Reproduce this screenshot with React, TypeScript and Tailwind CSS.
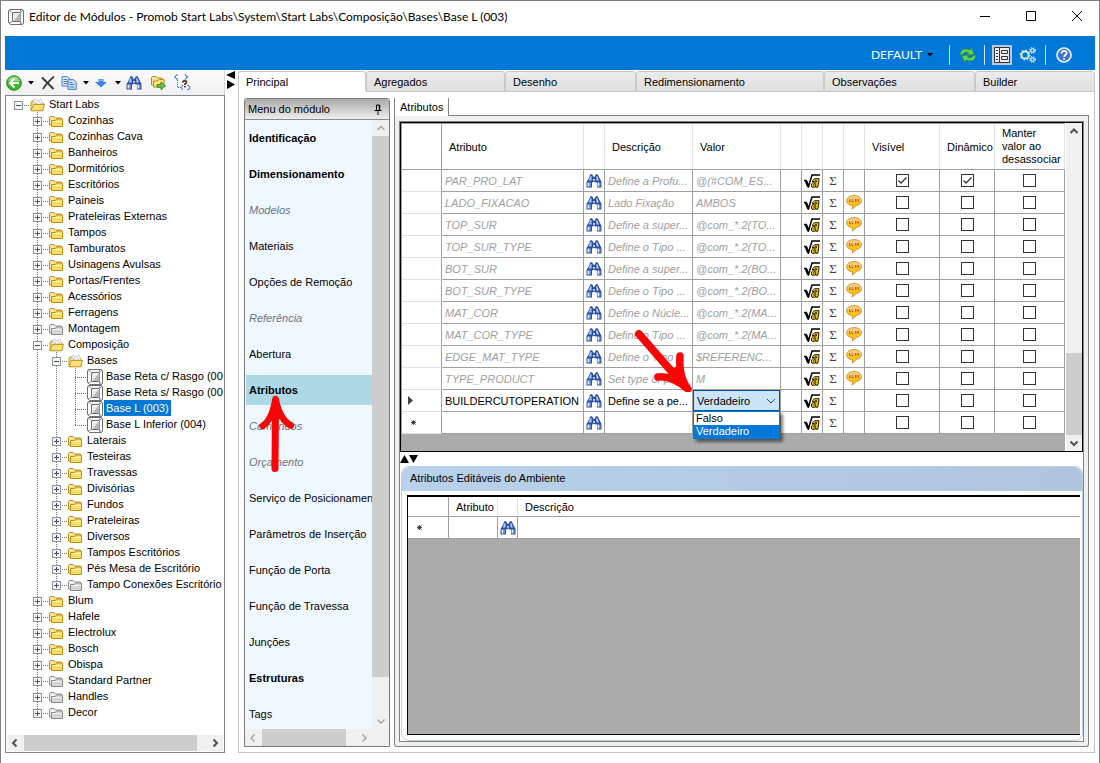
import type { ReactNode } from "react"
import clsx from "clsx"

/* ---------- data ---------- */

type NodeKind = "folder" | "open" | "gray" | "module"
type TreeItem = { label: string; level: number; kind: NodeKind; toggle?: "+" | "-"; last?: boolean; selected?: boolean }

const tree: TreeItem[] = [
  { label: "Start Labs", level: 0, kind: "open", toggle: "-" },
  { label: "Cozinhas", level: 1, kind: "folder", toggle: "+" },
  { label: "Cozinhas Cava", level: 1, kind: "folder", toggle: "+" },
  { label: "Banheiros", level: 1, kind: "folder", toggle: "+" },
  { label: "Dormitórios", level: 1, kind: "folder", toggle: "+" },
  { label: "Escritórios", level: 1, kind: "folder", toggle: "+" },
  { label: "Paineis", level: 1, kind: "folder", toggle: "+" },
  { label: "Prateleiras Externas", level: 1, kind: "folder", toggle: "+" },
  { label: "Tampos", level: 1, kind: "folder", toggle: "+" },
  { label: "Tamburatos", level: 1, kind: "folder", toggle: "+" },
  { label: "Usinagens Avulsas", level: 1, kind: "folder", toggle: "+" },
  { label: "Portas/Frentes", level: 1, kind: "folder", toggle: "+" },
  { label: "Acessórios", level: 1, kind: "folder", toggle: "+" },
  { label: "Ferragens", level: 1, kind: "folder", toggle: "+" },
  { label: "Montagem", level: 1, kind: "gray", toggle: "+" },
  { label: "Composição", level: 1, kind: "open", toggle: "-" },
  { label: "Bases", level: 2, kind: "open", toggle: "-" },
  { label: "Base Reta c/ Rasgo (00", level: 3, kind: "module" },
  { label: "Base Reta s/ Rasgo (00", level: 3, kind: "module" },
  { label: "Base L (003)", level: 3, kind: "module", selected: true },
  { label: "Base L Inferior (004)", level: 3, kind: "module", last: true },
  { label: "Laterais", level: 2, kind: "folder", toggle: "+" },
  { label: "Testeiras", level: 2, kind: "folder", toggle: "+" },
  { label: "Travessas", level: 2, kind: "folder", toggle: "+" },
  { label: "Divisórias", level: 2, kind: "folder", toggle: "+" },
  { label: "Fundos", level: 2, kind: "folder", toggle: "+" },
  { label: "Prateleiras", level: 2, kind: "folder", toggle: "+" },
  { label: "Diversos", level: 2, kind: "folder", toggle: "+" },
  { label: "Tampos Escritórios", level: 2, kind: "folder", toggle: "+" },
  { label: "Pés Mesa de Escritório", level: 2, kind: "folder", toggle: "+" },
  { label: "Tampo Conexões Escritório", level: 2, kind: "gray", toggle: "+", last: true },
  { label: "Blum", level: 1, kind: "folder", toggle: "+" },
  { label: "Hafele", level: 1, kind: "folder", toggle: "+" },
  { label: "Electrolux", level: 1, kind: "folder", toggle: "+" },
  { label: "Bosch", level: 1, kind: "folder", toggle: "+" },
  { label: "Obispa", level: 1, kind: "folder", toggle: "+" },
  { label: "Standard Partner", level: 1, kind: "gray", toggle: "+" },
  { label: "Handles", level: 1, kind: "gray", toggle: "+" },
  { label: "Decor", level: 1, kind: "gray", toggle: "+", last: true },
]

const tabs = ["Principal", "Agregados", "Desenho", "Redimensionamento", "Observações", "Builder"]

const menu = [
  { label: "Identificação", style: "bold" },
  { label: "Dimensionamento", style: "bold" },
  { label: "Modelos", style: "off" },
  { label: "Materiais", style: "" },
  { label: "Opções de Remoção", style: "" },
  { label: "Referência", style: "off" },
  { label: "Abertura", style: "" },
  { label: "Atributos", style: "bold", active: true },
  { label: "Comandos", style: "off" },
  { label: "Orçamento", style: "off" },
  { label: "Serviço de Posicionamen", style: "" },
  { label: "Parâmetros de Inserção", style: "" },
  { label: "Função de Porta", style: "" },
  { label: "Função de Travessa", style: "" },
  { label: "Junções", style: "" },
  { label: "Estruturas", style: "bold" },
  { label: "Tags", style: "" },
]

type Row = { name: string; desc: string; value: string; note?: boolean; on?: boolean; mark?: "current" | "new" }

const rows: Row[] = [
  { name: "PAR_PRO_LAT", desc: "Define a Profu...", value: "@(#COM_ES...", on: true },
  { name: "LADO_FIXACAO", desc: "Lado Fixação", value: "AMBOS", note: true },
  { name: "TOP_SUR", desc: "Define a super...", value: "@com_*.2(TO...", note: true },
  { name: "TOP_SUR_TYPE", desc: "Define o Tipo ...", value: "@com_*.2(TO...", note: true },
  { name: "BOT_SUR", desc: "Define a super...", value: "@com_*.2(BO...", note: true },
  { name: "BOT_SUR_TYPE", desc: "Define o Tipo ...", value: "@com_*.2(BO...", note: true },
  { name: "MAT_COR", desc: "Define o Núcle...", value: "@com_*.2(MA...", note: true },
  { name: "MAT_COR_TYPE", desc: "Define o Tipo ...", value: "@com_*.2(MA...", note: true },
  { name: "EDGE_MAT_TYPE", desc: "Define o Tipo ...", value: "$REFERENC...", note: true },
  { name: "TYPE_PRODUCT", desc: "Set type of pr...", value: "M", note: true },
  { name: "BUILDERCUTOPERATION", desc: "Define se a pe...", value: "Verdadeiro", mark: "current" },
  { name: "", desc: "", value: "", mark: "new" },
]

/* ---------- icons ---------- */

const ModuleIcon = ({ className = "" }: { className?: string }) => (
  <svg viewBox="0 0 16 16" className={clsx("size-4 shrink-0", className)} fill="none" stroke="#6e6e6e">
    <path d="M.5 1.500 1.500.5h13l1 1v13l-1 1H2.500L.5 13.500z" fill="#fff" />
    <path d="M1 1 4.500 3.500M15 1 12.500 3.500M1 14 4.500 12.500M14.500 15 12.500 12.500" strokeWidth=".8" />
    <path d="M4.500 3.500h8v9h-8z" fill="#eee" />
    <path d="M12 4v8H5.500z" fill="#b8b8b8" stroke="none" />
    <path d="M12.500 1v14" stroke="#9a9a9a" />
  </svg>
)

const FolderIcon = ({ kind }: { kind: NodeKind }) => {
  const gray = kind === "gray"
  const line = gray ? "#8b8b8b" : "#b8901c"
  const fill = gray ? "#d6d6d6" : "#fadc62"
  if (kind === "open")
    return (
      <svg viewBox="0 0 15 14" className="h-3.5 w-[15px]" stroke="#c39a22">
        <path d="M1 12.500V4.500L2 3h3l1 1.500h7v8z" fill="#f3d877" />
        <path d="M2.500 6 5 1l3 2 3-2 2 5z" fill="#fff" stroke="#bcb8a0" strokeWidth=".7" />
        <path d="m4 4 4 3M7 3 5 7m4-4 2 3" stroke="#96a5b5" strokeWidth=".6" />
        <path d="M1 12.800 3.500 6.500h11l-2 6.300z" fill="#fbe07a" />
      </svg>
    )
  return (
    <svg viewBox="0 0 15 14" className="h-3.5 w-[15px]" stroke={line}>
      <path d="M.5 11V3.500l1-1h3.500l1.500 1.500h6v7z" fill={gray ? "#eee" : "#f8e6a0"} />
      <path d="M2.500 12.500v-6h4l1-1.500h6v7.500z" fill={fill} />
      <path d="M3.500 7.500h9.500" stroke="#fff" opacity=".7" />
    </svg>
  )
}

const Binoculars = () => (
  <svg viewBox="0 0 16 16" className="mx-auto size-4">
    <path d="M3 5 4 2h2.500L8 4.500 9.500 2H12l1.500 3 2 4v5.500h-4.500V9.500H9.500L8 8.500l-1.500 1H6v5H.5V9z" fill="#2b4ea3" />
    <path d="M1.500 9.500h2v4h-2zM11.500 9.500h1.500v4h-1.500z" fill="#e3eefc" />
    <path d="M3.500 9.500H5v4H3.500zM13 9.500h1.500v4H13z" fill="#6f98dc" />
    <path d="m3.800 5 .7-2h1L5.500 7.500H2.800zM10.200 3h1l1.800 4.500h-2.500z" fill="#b5cff5" />
    <path d="M7.200 6h1.600v1.800H7.200z" fill="#eef4fc" />
    <path d="M4.200 1.500H6.300M9.700 1.500h2.100" stroke="#5b80c8" />
  </svg>
)

const RootIcon = () => (
  <svg viewBox="0 0 16 14" className="mx-auto h-3.5 w-4" fill="none">
    <path d="M0 6.500h2l2.500 6L8 1h8" stroke="#000" strokeWidth="1.500" />
    <path d="m2 7 2.500 6" stroke="#000" strokeWidth="2.500" />
    <path d="M8.700 6.500 10.500 4.700H15v1.200l-1.200 7.300h-2.200l.2-1-1.500 1.100H8.200L7.300 12l.5-2.300 2-1.700h2.500l.2-1.300h-1.500l-1 1H8.500z" fill="#ffc800" stroke="#000" strokeWidth=".9" />
    <path d="m9.800 11.300.3-1.600h1.700l-.3 1.600z" fill="#fff" stroke="#000" strokeWidth=".7" />
  </svg>
)

const NoteIcon = () => (
  <svg viewBox="0 0 16 15" className="mx-auto h-[15px] w-4">
    <path d="M8 .6c4.200 0 7.400 2 7.400 5 0 2.800-2.200 4.400-5 4.900L6 14.200l.8-3.600C3 10.300.6 8.500.6 5.700c0-3 3.200-5.100 7.400-5.100z" fill="#fcc21c" stroke="#c98d38" strokeWidth=".9" />
    <path d="M8 1.200c3.600 0 6.400 1.500 6.600 4.300H1.400C1.600 2.700 4.400 1.200 8 1.200z" fill="#fbcb85" />
    <path d="M3.500 4v2.500H5M6 4v2.500h1.500M9.500 4v2.500M11 4v2.500M12.500 4v2.500" stroke="#b8651b" fill="none" />
  </svg>
)

const Pointer = ({ className = "" }: { className?: string }) => (
  <svg viewBox="0 0 6 4" className={clsx("h-1 w-1.5 shrink-0", className)}>
    <path d="M0 0h6L3 3.500z" />
  </svg>
)

const Chevron = ({ dir, dim }: { dir: "up" | "down" | "left" | "right"; dim?: boolean }) => {
  const d = { up: "M1.500 7 5 3.500 8.500 7", down: "M1.500 3.500 5 7l3.500-3.500", left: "M6.500 1.500 3 5l3.500 3.500", right: "M3.500 1.500 7 5 3.500 8.500" }[dir]
  return (
    <svg viewBox="0 0 10 10" className="size-2.5" fill="none" stroke={dim ? "#a3a3a3" : "#505050"} strokeWidth={dim ? "1.400" : "2"}>
      <path d={d} />
    </svg>
  )
}

const ScrollButton = ({ dir, dim }: { dir: "up" | "down" | "left" | "right"; dim?: boolean }) => (
  <button aria-label={dir} className="flex size-4 shrink-0 items-center justify-center">
    <Chevron dir={dir} dim={dim} />
  </button>
)

/* ---------- tree panel ---------- */

const Guide = ({ children, vertical, half }: { children?: ReactNode; vertical?: boolean; half?: boolean }) => (
  <svg viewBox="0 0 19 16" className="h-4 w-[19px] shrink-0 overflow-visible" shapeRendering="crispEdges">
    {vertical && <path d={half ? "M9.500 0v9" : "M9.500 0v16"} stroke="#777" strokeDasharray="1 1" />}
    {children}
  </svg>
)

const TreeRow = ({ item, open2 }: { item: TreeItem; open2: boolean }) => (
  <li className="flex h-4 items-center pl-[3px]">
    {Array.from({ length: item.level }, (_, i) => (
      <Guide key={i} vertical={i === 1 || (i === 2 && open2)} />
    ))}
    <Guide vertical={item.level > 0} half={item.last}>
      <path d="M9 9.500h12" stroke="#777" strokeDasharray="1 1" />
      {item.toggle && (
        <>
          <path d="M5.500 5.500h8v8h-8z" fill="#f6f6f6" stroke="#919191" />
          <path d={item.toggle === "+" ? "M7 9.500h5M9.500 7v5" : "M7 9.500h5"} stroke="#31519b" />
        </>
      )}
    </Guide>
    <span className="flex w-[19px] shrink-0 justify-center pt-0.5">
      {item.kind === "module" ? <ModuleIcon /> : <FolderIcon kind={item.kind} />}
    </span>
    <a href="#" className={clsx("px-0.5 leading-4 whitespace-nowrap", item.selected && "bg-[#0078d7] text-white")}>
      {item.label}
    </a>
  </li>
)

const ToolButton = ({ label, children, className }: { label: string; children: ReactNode; className?: string }) => (
  <button aria-label={label} className={clsx("flex h-5 shrink-0 items-center justify-center", className)}>
    {children}
  </button>
)

const TreeToolbar = () => (
  <div className="flex h-[25px] items-center border-r border-gray-300 bg-linear-to-b from-[#fafafa] to-[#f0f0f0]">
    <ToolButton label="Voltar" className="w-[18px]">
      <svg viewBox="0 0 16 16" className="size-4">
        <circle cx="8" cy="8" r="7.300" fill="#3db52c" stroke="#28871c" />
        <path d="M2 6a6.300 6.300 0 0 1 12 0C10 8 6 4 2 6z" fill="#8fdc7d" />
        <path d="M8.500 3.500 4 8l4.500 4.500M4.500 8H13" stroke="#fff" strokeWidth="2.200" fill="none" />
      </svg>
    </ToolButton>
    <ToolButton label="Opções de voltar" className="w-4"><Pointer /></ToolButton>
    <ToolButton label="Excluir" className="w-[18px]">
      <svg viewBox="0 0 14 14" className="size-3.5" stroke="#3a3a3a" fill="none">
        <path d="M1 1.500 12.500 13" strokeWidth="2" />
        <path d="M13 .5C9 4 5 8 2 13" strokeWidth="1.700" />
      </svg>
    </ToolButton>
    <ToolButton label="Copiar" className="ml-0.5 w-5">
      <svg viewBox="0 0 16 14" className="h-3.5 w-4" stroke="#4a78bb">
        <path d="M1 .7h5.500l2 2V10H1z" fill="#e4effc" />
        <path d="M2.500 3.500H6m-3.500 2H7m-4.500 2H7" />
        <path d="M7 3.700h5.500l2.800 2.800v6.800H7z" fill="#cfe2fa" />
        <path d="M8.500 6.500h3m-3 2h5m-5 2.500h5" />
      </svg>
    </ToolButton>
    <ToolButton label="Opções de copiar" className="w-3.5"><Pointer /></ToolButton>
    <ToolButton label="Mover" className="ml-0.5 w-3">
      <svg viewBox="0 0 12 10" className="h-2.5 w-3">
        <path d="M3.500 1h5v3H12L6 9.500 0 4h3.500z" fill="#3f82e4" />
        <path d="M4 1.500h4v1.500H4z" fill="#86b4f2" />
      </svg>
    </ToolButton>
    <ToolButton label="Opções de mover" className="ml-1 w-3.5"><Pointer /></ToolButton>
    <ToolButton label="Localizar" className="w-[18px]"><Binoculars /></ToolButton>
    <ToolButton label="Exportar" className="ml-1.5 w-[18px]">
      <svg viewBox="0 0 15 14" className="h-3.5 w-[15px]" stroke="#b48d1c">
        <path d="M.5 9V1.500l1-1H5L6.500 2H11v7z" fill="#f6e39a" />
        <path d="M2.500 11V5h4L8 3.500h5V11z" fill="#fbe27a" />
        <path d="M6 8.500h4V6l4.500 4L10 13.700v-2.500H6z" fill="#6cc644" stroke="#3c8a26" />
      </svg>
    </ToolButton>
    <ToolButton label="Propriedades" className="ml-1.5 w-[18px]">
      <svg viewBox="0 0 17 17" className="size-[17px]" fill="none" stroke="#2c62c9">
        <path d="M3.500.5.5 3l3 2.500M11 .5 13.500 3 11 5.500M13.500 11l3 2.500-3 2.500M9 11l-2 2.500L9 16" strokeWidth="1.200" strokeDasharray="1.500 .6" />
        <path d="M3.500 6v7.500h3" strokeDasharray="1 1" />
        <path d="M9 8.500C9 6 12.500 6 12.500 8c0 1.400-1.700 1.300-1.700 3M10.800 12v1.500" stroke="#5a3418" strokeWidth="1.700" />
      </svg>
    </ToolButton>
  </div>
)

const TreePanel = () => (
  <aside className="flex w-[220px] shrink-0 flex-col">
    <TreeToolbar />
    <div className="flex flex-1 flex-col border border-[#828790] bg-white">
      <ul className="flex-1 overflow-hidden">
        {tree.map((item, i) => (
          <TreeRow key={i} item={item} open2={i > 16 && i < 31 && item.level > 1} />
        ))}
      </ul>
      <div className="m-px flex bg-[#f0f0f0]">
        <ScrollButton dir="left" />
        <div className="ml-px h-4 w-[173px] bg-[#cdcdcd]" />
        <div className="ml-auto"><ScrollButton dir="right" /></div>
      </div>
    </div>
  </aside>
)

/* ---------- module menu ---------- */

const RedUpArrow = () => (
  <svg viewBox="0 0 36 86" className="pointer-events-none absolute top-4 left-3 z-10 h-[86px] w-9" fill="none" stroke="#fa0505" strokeLinecap="round" strokeLinejoin="round">
    <path d="M17 77.500 17.500 10" strokeWidth="7" />
    <path d="M4.500 35C11 31 15.500 20 17.500 8 20 20 24 30 33 34.500" strokeWidth="6.500" />
    <path d="M17.500 5 9.500 28h16z" fill="#fa0505" stroke="none" />
  </svg>
)

const ModuleMenu = () => (
  <div className="flex w-[146px] shrink-0 flex-col rounded-t-[3px] border border-[#7a7a7a] bg-[#f0f0f0]">
    <div className="flex h-[21px] items-center justify-between rounded-t-[2px] border-b border-[#8a8a8a] bg-linear-to-b from-[#aaa] to-[#eee] pr-[7px] pl-[3px]">
      <h2>Menu do módulo</h2>
      <button aria-label="Fixar menu">
        <svg viewBox="0 0 8 11" className="h-[11px] w-2" fill="none" stroke="#000">
          <path d="M2.500 6V1h3v5M.500 6.500h7M4 7v4" />
          <path d="M5.500 1v5" strokeWidth="1.500" />
        </svg>
      </button>
    </div>
    <div className="flex flex-1">
      <nav className="flex flex-1 flex-col gap-1.5 overflow-hidden bg-[#f0f8ff] pt-[3px] pl-px">
        {menu.map(({ label, style, active }) => (
          <a
            key={label}
            href="#"
            className={clsx(
              "relative flex h-[30px] items-center pl-[3px] whitespace-nowrap",
              active && "bg-[#add8e6]",
              style === "bold" && "font-bold",
              style === "off" && "text-gray-500 italic",
            )}
          >
            {label}
            {active && <RedUpArrow />}
          </a>
        ))}
      </nav>
      <div className="flex w-[17px] flex-col items-center bg-[#f0f0f0]">
        <ScrollButton dir="up" dim />
        <div className="min-h-10 w-full flex-1 bg-[#cdcdcd]" />
        <div className="pt-9"><ScrollButton dir="down" dim /></div>
      </div>
    </div>
    <div className="flex h-[17px] items-center pr-[17px]">
      <ScrollButton dir="left" dim />
      <div className="ml-px h-full w-[84px] bg-[#cdcdcd]" />
      <div className="ml-auto"><ScrollButton dir="right" dim /></div>
    </div>
  </div>
)

/* ---------- attribute grids ---------- */

const Tick = ({ label, on }: { label: string; on?: boolean }) => (
  <label className="relative mx-auto block size-[13px]">
    <input type="checkbox" aria-label={label} defaultChecked={on} className="peer block size-[13px] appearance-none border border-[#333] bg-white" />
    <svg viewBox="0 0 13 13" className="pointer-events-none absolute inset-0 hidden size-[13px] peer-checked:block" fill="none" stroke="#333">
      <path d="m2.500 6.500 2.500 2.500 5.500-5.500" strokeWidth="1.300" />
    </svg>
  </label>
)

const RedDownArrow = () => (
  <svg viewBox="0 0 60 66" className="pointer-events-none absolute -top-16 -left-[61px] z-20 h-[66px] w-[60px]" fill="none" stroke="#fa0505" strokeLinecap="round" strokeLinejoin="round">
    <path d="m7 8 40 46" strokeWidth="8" />
    <path d="M26 51c9-1 18 2 30 12C49 54 47 42 48 30" strokeWidth="7.500" />
    <path d="M58 65 34 51l14-15z" fill="#fa0505" stroke="none" />
  </svg>
)

const ValueSelect = () => (
  <div className="relative h-[21px]">
    <select aria-label="Valor" defaultValue="Verdadeiro" className="block h-[21px] w-full appearance-none border border-[#005499] bg-[#cce4f7] pl-[3px] text-[11px] text-black">
      <option>Falso</option>
      <option>Verdadeiro</option>
    </select>
    <svg viewBox="0 0 10 6" className="pointer-events-none absolute top-2 right-1 h-1.5 w-2.5" fill="none" stroke="#444">
      <path d="m1 1 4 4 4-4" />
    </svg>
    <ul role="listbox" className="absolute top-[21px] left-0 z-10 w-full border border-[#0078d7] bg-white leading-[13px] text-black shadow-[3px_3px_3px_rgba(0,0,0,0.5)]">
      <li role="option" aria-selected="false" className="pl-0.5">Falso</li>
      <li role="option" aria-selected="true" className="bg-[#0078d7] pl-0.5 text-white">Verdadeiro</li>
    </ul>
    <RedDownArrow />
  </div>
)

const RowMark = ({ mark }: { mark?: Row["mark"] }) => (
  <>
    {mark === "current" && (
      <svg viewBox="0 0 5 9" className="ml-1.5 h-[9px] w-[5px]"><path d="M0 0v9l5-4.500z" fill="#444" /></svg>
    )}
    {mark === "new" && (
      <svg viewBox="0 0 7 7" className="ml-2 size-[7px]" stroke="#555">
        <path d="M3.500 1v5M1 3.500h5M1.500 1.500l4 4M5.500 1.500l-4 4" />
        <circle cx="3.500" cy="3.500" r="1.800" fill="#444" stroke="none" />
      </svg>
    )}
  </>
)

const cell = "border-r border-b border-[#9f9f9f] p-0"
const headCell = "border-r border-r-[#e2e2e2] border-b border-b-[#9f9f9f] p-0 pl-[7px] text-left font-normal"

const AttributeTable = () => (
  <table className="w-full table-fixed border-separate border-spacing-0 bg-white">
    <colgroup>
      <col className="w-10" />
      <col className="w-[142px]" />
      <col className="w-[21px]" />
      <col className="w-[88px]" />
      <col className="w-[88px]" />
      <col className="w-[21px]" />
      <col className="w-[21px]" />
      <col className="w-[21px]" />
      <col className="w-[21px]" />
      <col className="w-[75px]" />
      <col className="w-[55px]" />
      <col className="w-[70px]" />
    </colgroup>
    <thead>
      <tr className="h-[46px]">
        <th className="border-r border-b border-[#9f9f9f]" />
        <th className={headCell}>Atributo</th>
        <th className={headCell} />
        <th className={headCell}>Descrição</th>
        <th className={headCell}>Valor</th>
        <th className={headCell} />
        <th className={headCell} />
        <th className={headCell} />
        <th className={headCell} />
        <th className={headCell}>Visível</th>
        <th className={headCell}>Dinâmico</th>
        <th className={clsx(headCell, "leading-[13px]")}>Manter<br />valor ao<br />desassociar</th>
      </tr>
    </thead>
    <tbody>
      {rows.map((row, i) => {
        const text = clsx(cell, "overflow-hidden pl-[3px] whitespace-nowrap", !row.mark && "text-[#a0a0a0] italic")
        return (
          <tr key={i} className="h-[22px]">
            <td className="border-r border-b border-r-[#9f9f9f] border-b-[#e2e2e2] p-0"><RowMark mark={row.mark} /></td>
            <td className={text}>{row.name}</td>
            <td className={cell}><Binoculars /></td>
            <td className={text}>{row.desc}</td>
            {row.mark === "current" ? <td className={cell}><ValueSelect /></td> : <td className={text}>{row.value}</td>}
            <td className={cell} />
            <td className={cell}><RootIcon /></td>
            <td className={clsx(cell, "text-center font-['Liberation_Serif',serif] text-[13px] leading-4 text-[#444]")}>Σ</td>
            <td className={cell}>{row.note && <NoteIcon />}</td>
            <td className={cell}><Tick label="Visível" on={row.on} /></td>
            <td className={cell}><Tick label="Dinâmico" on={row.on} /></td>
            <td className={cell}><Tick label="Manter valor ao desassociar" /></td>
          </tr>
        )
      })}
    </tbody>
  </table>
)

const EnvironmentPanel = () => (
  <section className="ml-px flex flex-1 flex-col rounded-lg border border-[#b9cfe8] bg-white">
    <h2 className="h-6 rounded-t-lg bg-linear-to-r from-[#b9d1ea] to-[#b0c4de] pl-2 leading-[23px]">Atributos Editáveis do Ambiente</h2>
    <div className="mt-1 mr-0.5 mb-[5px] ml-[5px] flex-1 border-t-2 border-b border-l border-black bg-[#ababab]">
      <table className="w-full table-fixed border-separate border-spacing-0 bg-white">
        <colgroup>
          <col className="w-[41px]" />
          <col className="w-[49px]" />
          <col className="w-5" />
          <col />
        </colgroup>
        <thead>
          <tr className="h-5">
            <th className="border-r border-b border-[#9f9f9f]" />
            <th className={headCell}>Atributo</th>
            <th className={headCell} />
            <th className="border-b border-[#9f9f9f] p-0 pl-[7px] text-left font-normal">Descrição</th>
          </tr>
        </thead>
        <tbody>
          <tr className="h-[22px]">
            <td className={cell}><RowMark mark="new" /></td>
            <td className={cell} />
            <td className={cell}><Binoculars /></td>
            <td className="border-b border-[#9f9f9f]" />
          </tr>
        </tbody>
      </table>
    </div>
  </section>
)

const AttributesPanel = () => (
  <section className="flex min-w-0 flex-1 flex-col">
    <div className="flex h-[18px]">
      <button className="border-x border-[#828282] px-[5px] leading-[17px]">Atributos</button>
      <div className="flex-1 border-b border-[#828282]" />
    </div>
    <div className="flex flex-1 flex-col rounded-b-[3px] border border-t-0 border-[#828282] bg-[#f0f0f0] px-1 pt-[5px] pb-1">
      <div className="flex flex-1 flex-col border border-[#828282] bg-white">
        <div className="flex border border-black bg-[#ababab]">
          <div className="min-w-0 flex-1 border-t border-l border-[#9f9f9f] pb-[17px]">
            <AttributeTable />
          </div>
          <div className="flex w-[17px] flex-col items-center border-l border-white bg-[#f0f0f0]">
            <ScrollButton dir="up" />
            <div className="mt-auto h-[82px] w-full bg-[#cdcdcd]" />
            <ScrollButton dir="down" />
          </div>
        </div>
        <div className="flex h-3.5 items-center">
          <svg viewBox="0 0 18 8" className="h-2 w-[18px]"><path d="M0 8h9L4.500 0zM9 0h9l-4.500 8z" /></svg>
        </div>
        <EnvironmentPanel />
      </div>
    </div>
  </section>
)

/* ---------- window chrome ---------- */

const TitleBar = () => (
  <header className="flex h-[35px] items-center pr-[17px] pl-[7px]">
    <ModuleIcon className="mb-1" />
    <h1 className="mb-1 ml-[5px] flex-1 font-[Lato,sans-serif] text-xs whitespace-nowrap">
      Editor de Módulos - Promob Start Labs\System\Start Labs\Composição\Bases\Base L (003)
    </h1>
    <div className="mb-1 flex items-center gap-9 pb-px">
      <button aria-label="Minimizar"><svg viewBox="0 0 10 10" className="size-2.5" stroke="#000"><path d="M0 5.500h10" /></svg></button>
      <button aria-label="Maximizar"><svg viewBox="0 0 10 10" className="size-2.5" fill="none" stroke="#000"><path d="M.5.500h9v9h-9z" /></svg></button>
      <button aria-label="Fechar"><svg viewBox="0 0 10 10" className="size-2.5" stroke="#000"><path d="m0 0 10 10M10 0 0 10" /></svg></button>
    </div>
  </header>
)

const Gear = ({ x, y, r, hole }: { x: number; y: number; r: number; hole: number }) => (
  <g fill="none" stroke="#d8e4f0">
    <circle cx={x} cy={y} r={r} strokeWidth={r - hole} />
    <circle cx={x} cy={y} r={r + 1} strokeWidth="1.600" strokeDasharray={r > 3 ? "1.700 1.840" : "1 1.200"} />
  </g>
)

const RibbonBar = () => (
  <div className="mx-1 flex h-[34px] items-center justify-end bg-[#0078d7] pt-1 pr-[23px]">
    <button className="flex items-center gap-[5px] font-[Lato,sans-serif] text-xs text-white">
      DEFAULT <Pointer className="text-black" />
    </button>
    <div className="mr-[9px] ml-4 h-5 w-px bg-white/80" />
    <button aria-label="Atualizar">
      <svg viewBox="0 0 18 16" className="h-4 w-[18px]" fill="#6fd052" stroke="#2b9a35" strokeWidth=".8">
        <path d="M1.500 7.500C1 3 6.500.5 10.800 3.200L12.500 1l2.500 6.500-6.800.3 1.500-2C7.500 4.300 4.500 5 3.500 7.800z" />
        <path d="M16.500 8.500C17 13 11.500 15.500 7.200 12.800L5.500 15 3 8.500l6.800-.3-1.500 2c2.200 1.500 5.200.8 6.200-2z" />
      </svg>
    </button>
    <div className="mx-[7px] h-5 w-px bg-white/80" />
    <button aria-label="Painel" className="flex size-5 items-center justify-center bg-[#b9cbe2]">
      <svg viewBox="0 0 16 16" className="size-4" fill="none" stroke="#333">
        <path d="M.5.500h15v15H.5z" fill="#eee" />
        <path d="M5.500 1v14M7.500 3.500h6v3h-6zM7.500 9.500h6v3h-6zM2 3.500h2M2 6.500h2M2 9.500h2M2 12.500h2" />
      </svg>
    </button>
    <button aria-label="Configurações" className="ml-[7px]">
      <svg viewBox="0 0 17 16" className="h-4 w-[17px]">
        <Gear x={6} y={8} r={3.6} hole={1.6} />
        <Gear x={13.5} y={3.5} r={1.7} hole={0.5} />
        <Gear x={13.5} y={12.5} r={1.7} hole={0.5} />
      </svg>
    </button>
    <div className="mr-2.5 ml-[9px] h-5 w-px bg-white/80" />
    <button aria-label="Ajuda">
      <svg viewBox="0 0 16 16" className="size-4">
        <circle cx="8" cy="8" r="7" fill="#3f72d6" stroke="#e8eef8" strokeWidth="1.700" />
        <path d="M5.500 6.500C5.500 3 10.700 3.200 10.700 6c0 2-2.600 2-2.600 4M8.100 11v1.800" fill="none" stroke="#fff" strokeWidth="1.700" />
      </svg>
    </button>
  </div>
)

export default function App() {
  return (
    <div className="flex min-h-screen flex-col border border-[#7f7f7f] bg-white font-['Liberation_Sans',Arial,sans-serif] text-[11px] leading-4 text-black">
      <TitleBar />
      <RibbonBar />
      <div className="flex flex-1 pr-1 pb-2.5 pl-1">
        <TreePanel />
        <div className="w-[13px] shrink-0 pt-px">
          <svg viewBox="0 0 13 18" className="h-[18px] w-[13px]"><path d="M10 0v8L1 4zM2 9v9l8-4.500z" /></svg>
        </div>
        <main className="flex min-w-0 flex-1 flex-col">
          <div className="grid h-[22px] grid-cols-[128fr_139fr_131fr_188fr_151fr_120fr] pt-px">
            {tabs.map((tab, i) => (
              <button
                key={tab}
                className={clsx(
                  "rounded-t-[3px] border border-[#c9c9c9] px-[7px] text-left",
                  i === 0 ? "border-b-white bg-white" : "bg-linear-to-b from-[#ececec] to-[#dfdfdf]",
                )}
              >
                {tab}
              </button>
            ))}
          </div>
          <div className="flex flex-1 gap-1 border border-t-0 border-[#c3c3c3] px-[5px] pt-1.5 pb-[5px]">
            <ModuleMenu />
            <AttributesPanel />
          </div>
        </main>
      </div>
    </div>
  )
}
